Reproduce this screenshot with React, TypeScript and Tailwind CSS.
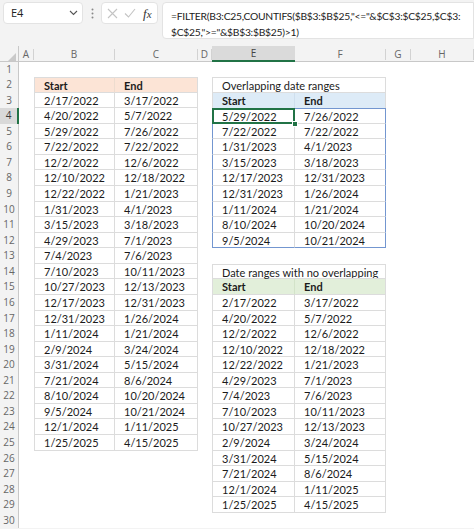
import React from 'react';

const T1: [string, string][] = [
  ['2/17/2022', '3/17/2022'],
  ['4/20/2022', '5/7/2022'],
  ['5/29/2022', '7/26/2022'],
  ['7/22/2022', '7/22/2022'],
  ['12/2/2022', '12/6/2022'],
  ['12/10/2022', '12/18/2022'],
  ['12/22/2022', '1/21/2023'],
  ['1/31/2023', '4/1/2023'],
  ['3/15/2023', '3/18/2023'],
  ['4/29/2023', '7/1/2023'],
  ['7/4/2023', '7/6/2023'],
  ['7/10/2023', '10/11/2023'],
  ['10/27/2023', '12/13/2023'],
  ['12/17/2023', '12/31/2023'],
  ['12/31/2023', '1/26/2024'],
  ['1/11/2024', '1/21/2024'],
  ['2/9/2024', '3/24/2024'],
  ['3/31/2024', '5/15/2024'],
  ['7/21/2024', '8/6/2024'],
  ['8/10/2024', '10/20/2024'],
  ['9/5/2024', '10/21/2024'],
  ['12/1/2024', '1/11/2025'],
  ['1/25/2025', '4/15/2025'],
];

const T2: [string, string][] = [
  ['5/29/2022', '7/26/2022'],
  ['7/22/2022', '7/22/2022'],
  ['1/31/2023', '4/1/2023'],
  ['3/15/2023', '3/18/2023'],
  ['12/17/2023', '12/31/2023'],
  ['12/31/2023', '1/26/2024'],
  ['1/11/2024', '1/21/2024'],
  ['8/10/2024', '10/20/2024'],
  ['9/5/2024', '10/21/2024'],
];

const T3: [string, string][] = [
  ['2/17/2022', '3/17/2022'],
  ['4/20/2022', '5/7/2022'],
  ['12/2/2022', '12/6/2022'],
  ['12/10/2022', '12/18/2022'],
  ['12/22/2022', '1/21/2023'],
  ['4/29/2023', '7/1/2023'],
  ['7/4/2023', '7/6/2023'],
  ['7/10/2023', '10/11/2023'],
  ['10/27/2023', '12/13/2023'],
  ['2/9/2024', '3/24/2024'],
  ['3/31/2024', '5/15/2024'],
  ['7/21/2024', '8/6/2024'],
  ['12/1/2024', '1/11/2025'],
  ['1/25/2025', '4/15/2025'],
];

const TXT = 'pl-[9px] whitespace-nowrap text-[11px] leading-[15px] text-[#1b1b1b]';

function bCell(r: number): React.ReactNode {
  if (r === 2)
    return <div className={`${TXT} bg-[#fce4d6] font-bold border-t border-l border-r border-b border-t-[#dcdcdc] border-l-[#dcdcdc] border-r-[#eddccf] border-b-[#dcdcdc]`}>Start</div>;
  if (r >= 3 && r <= 25)
    return <div className={`${TXT} border-l border-r border-b border-[#dcdcdc]`}>{T1[r - 3][0]}</div>;
  return <div />;
}

function cCell(r: number): React.ReactNode {
  if (r === 2)
    return <div className={`${TXT} bg-[#fce4d6] font-bold border-t border-r border-b border-[#dcdcdc]`}>End</div>;
  if (r >= 3 && r <= 25)
    return <div className={`${TXT} border-r border-b border-[#dcdcdc]`}>{T1[r - 3][1]}</div>;
  return <div />;
}

function eCell(r: number): React.ReactNode {
  if (r === 2)
    return <div className={`${TXT} border-t border-l border-b border-[#dcdcdc]`}>Overlapping date ranges</div>;
  if (r === 3)
    return <div className={`${TXT} bg-[#ddebf7] font-bold border-l border-r border-l-[#dcdcdc] border-r-[#cfdfee]`}>Start</div>;
  if (r === 4)
    return (
      <div className={`${TXT} relative border-t border-l border-r border-b border-t-[#7396d0] border-l-[#7396d0] border-r-[#dcdcdc] border-b-[#dcdcdc]`}>
        {T2[0][0]}
        <div className="absolute -left-[1px] -top-[1px] -right-[1px] -bottom-[1px] border-2 border-[#217346]" />
        <div className="absolute -right-[4px] -bottom-[4px] w-[6px] h-[6px] bg-[#217346] border border-white" />
      </div>
    );
  if (r > 4 && r < 12)
    return <div className={`${TXT} border-l border-r border-b border-l-[#7396d0] border-r-[#dcdcdc] border-b-[#dcdcdc]`}>{T2[r - 4][0]}</div>;
  if (r === 12)
    return <div className={`${TXT} border-l border-r border-b border-l-[#7396d0] border-r-[#dcdcdc] border-b-[#7396d0]`}>{T2[8][0]}</div>;
  if (r === 14)
    return <div className={`${TXT} border-t border-l border-b border-[#dcdcdc]`}>Date ranges with no overlapping</div>;
  if (r === 15)
    return <div className={`${TXT} bg-[#e2efda] font-bold border-l border-r border-b border-l-[#dcdcdc] border-r-[#d3e3c9] border-b-[#dcdcdc]`}>Start</div>;
  if (r >= 16 && r <= 29)
    return <div className={`${TXT} border-l border-r border-b border-[#dcdcdc]`}>{T3[r - 16][0]}</div>;
  return <div />;
}

function fCell(r: number): React.ReactNode {
  if (r === 2) return <div className="border-t border-r border-b border-[#dcdcdc]" />;
  if (r === 3)
    return <div className={`${TXT} bg-[#ddebf7] font-bold border-r border-[#dcdcdc]`}>End</div>;
  if (r === 4)
    return <div className={`${TXT} border-t border-r border-b border-t-[#7396d0] border-r-[#7396d0] border-b-[#dcdcdc]`}>{T2[0][1]}</div>;
  if (r > 4 && r < 12)
    return <div className={`${TXT} border-r border-b border-r-[#7396d0] border-b-[#dcdcdc]`}>{T2[r - 4][1]}</div>;
  if (r === 12)
    return <div className={`${TXT} border-r border-b border-[#7396d0]`}>{T2[8][1]}</div>;
  if (r === 14) return <div className="border-t border-r border-b border-[#dcdcdc]" />;
  if (r === 15)
    return <div className={`${TXT} bg-[#e2efda] font-bold border-r border-b border-[#dcdcdc]`}>End</div>;
  if (r >= 16 && r <= 29)
    return <div className={`${TXT} border-r border-b border-[#dcdcdc]`}>{T3[r - 16][1]}</div>;
  return <div />;
}

function RowHeader({ r }: { r: number }) {
  if (r === 4)
    return (
      <div className="bg-[#d9d9d9] border-r-2 border-[#217346] text-center text-[10px] leading-[15px] text-[#3a3a3a] font-['Open_Sans',sans-serif]">
        {r}
      </div>
    );
  return (
    <div className="bg-[#f3f3f3] border-r border-[#c8c8c8] text-center text-[10px] leading-[15px] text-[#666] font-['Open_Sans',sans-serif]">
      {r}
    </div>
  );
}

const COLS = 'grid grid-cols-[19px_15px_81px_83px_14px_83px_91px_25px_1fr]';

function ColHead({ label, active }: { label: string; active?: boolean }) {
  if (active)
    return (
      <div className="bg-[#dadada] border-b-2 border-[#217346] text-center text-[10px] leading-[14px] text-[#444]">
        {label}
      </div>
    );
  return (
    <div className="flex items-center">
      <div className="flex-1 text-center text-[10px] leading-[14px] text-[#666]">{label}</div>
      <div className="w-px h-[11px] bg-[#d2d2d2]" />
    </div>
  );
}

export default function App() {
  const rows = Array.from({ length: 30 }, (_, i) => i + 1);
  return (
    <div className="w-[474px] h-[529px] overflow-hidden bg-[#f3f3f3] font-['Lato',sans-serif]">
      {/* formula bar */}
      <div className="h-[46px] flex items-start pt-[2px] pl-[3px]">
        <div className="shrink-0 w-[80px] h-[22px] bg-white border border-[#e3e3e3] rounded-[4px] flex items-center justify-between pl-[7px] pr-[4px]">
          <span className="text-[11px] text-[#222] font-['Open_Sans',sans-serif]">E4</span>
          <svg width="9" height="6" viewBox="0 0 9 6">
            <path d="M1 1 L4.5 4.5 L8 1" fill="none" stroke="#555" strokeWidth="1.1" />
          </svg>
        </div>
        <div className="shrink-0 w-[18px] h-[22px] flex items-center justify-center">
          <svg width="3" height="11" viewBox="0 0 3 11">
            <circle cx="1.5" cy="1.5" r="1" fill="#888" />
            <circle cx="1.5" cy="5.5" r="1" fill="#888" />
            <circle cx="1.5" cy="9.5" r="1" fill="#888" />
          </svg>
        </div>
        <div className="shrink-0 w-[57px] h-[22px] bg-white border border-[#e3e3e3] rounded-[4px] flex items-center pl-[5px]">
          <svg width="11" height="11" viewBox="0 0 11 11">
            <path d="M1 1 L10 10 M10 1 L1 10" stroke="#c4c4c4" strokeWidth="1.1" />
          </svg>
          <svg width="12" height="10" viewBox="0 0 12 10" className="ml-[6px]">
            <path d="M1 5.5 L4.5 9 L11 1" fill="none" stroke="#c4c4c4" strokeWidth="1.1" />
          </svg>
          <span className="ml-[7px] text-[13px] italic text-[#333] font-['Liberation_Serif',serif] leading-none">
            f<span className="text-[11px]">x</span>
          </span>
        </div>
        <div className="ml-[4px] flex-1 min-w-0 overflow-hidden h-[37px] bg-white border border-[#e3e3e3] rounded-l-[4px] pl-[8px] pt-[5px] text-[10.3px] tracking-[-0.25px] leading-[16px] text-[#1b1b1b] whitespace-nowrap">
          <div>=FILTER(B3:C25,COUNTIFS($B$3:$B$25,"&lt;="&amp;$C$3:$C$25,$C$3:</div>
          <div>$C$25,"&gt;="&amp;$B$3:$B$25)&gt;1)</div>
        </div>
      </div>
      {/* column headers */}
      <div className={`${COLS} h-[15.5px] border-b border-[#c8c8c8] font-['Open_Sans',sans-serif]`}>
        <div className="flex items-end justify-end pr-[2px] pb-[1px] border-r border-[#c8c8c8]">
          <svg width="8" height="8" viewBox="0 0 8 8">
            <polygon points="8,0 8,8 0,8" fill="#c9c9c9" />
          </svg>
        </div>
        <ColHead label="A" />
        <ColHead label="B" />
        <ColHead label="C" />
        <ColHead label="D" />
        <ColHead label="E" active />
        <ColHead label="F" />
        <ColHead label="G" />
        <ColHead label="H" />
      </div>
      {/* sheet */}
      <div className={`${COLS} grid-rows-[repeat(30,15.57px)] bg-white`}>
        {rows.map((r) => (
          <React.Fragment key={r}>
            <RowHeader r={r} />
            <div />
            {bCell(r)}
            {cCell(r)}
            <div />
            {eCell(r)}
            {fCell(r)}
            <div />
            <div />
          </React.Fragment>
        ))}
      </div>
    </div>
  );
}
